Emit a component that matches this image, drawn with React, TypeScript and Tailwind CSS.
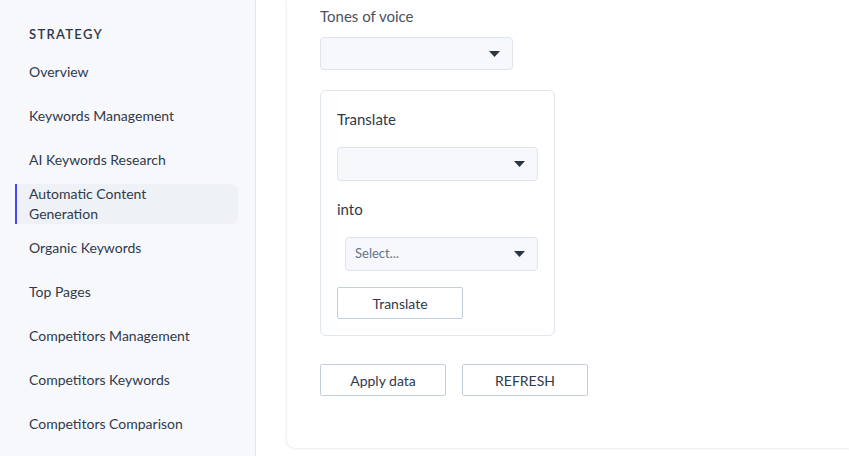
import { useState } from "react";

const navItems = [
  "Overview",
  "Keywords Management",
  "AI Keywords Research",
  "Automatic Content Generation",
  "Organic Keywords",
  "Top Pages",
  "Competitors Management",
  "Competitors Keywords",
  "Competitors Comparison",
];

function Caret() {
  return (
    <svg width="11" height="6" viewBox="0 0 11 6" className="shrink-0">
      <path d="M0 0h11L5.5 6z" fill="#2b3443" />
    </svg>
  );
}

function SelectBox({ placeholder, className }: { placeholder?: string; className: string }) {
  return (
    <div
      className={`flex items-center justify-between rounded-[4px] border border-[#dfe4ed] bg-[#f6f8fb] pl-[9px] pr-[12px] ${className}`}
    >
      <span className="text-[13px] text-[#66728a]">{placeholder}</span>
      <Caret />
    </div>
  );
}

function OutlineButton({ label, className = "" }: { label: string; className?: string }) {
  return (
    <button
      className={`h-[32px] w-[126px] rounded-[2px] border border-[#c5cfdc] bg-white text-[14px] text-[#2f3a4c] ${className}`}
    >
      {label}
    </button>
  );
}

export default function App() {
  const [active] = useState("Automatic Content Generation");

  return (
    <div
      className="flex h-[456px] w-[849px] overflow-hidden bg-white"
      style={{ fontFamily: "Lato, 'Open Sans', sans-serif" }}
    >
      {/* sidebar */}
      <aside className="w-[256px] shrink-0 border-r border-[#e4e7f0] bg-[#f7f8fc] pt-[24px]">
        <div className="pl-[29px] text-[13px] font-semibold uppercase leading-[20px] tracking-[0.1em] text-[#2e3747]">
          Strategy
        </div>
        <nav className="mt-[8px] flex flex-col gap-[4px] pl-[15px] pr-[17px]">
          {navItems.map((item) => {
            const isActive = item === active;
            return (
              <div
                key={item}
                className={`flex h-[40px] items-center rounded-r-[8px] border-l-2 pl-[12px] pr-[20px] text-[14px] leading-[20px] text-[#2f3a4c] ${
                  isActive ? "border-[#4747f5] bg-[#eef1f6]" : "border-transparent"
                }`}
              >
                {item}
              </div>
            );
          })}
        </nav>
      </aside>

      {/* main */}
      <main className="flex-1 pb-[8px] pl-[31px]">
        <div className="h-full rounded-bl-[8px] bg-white pl-[33px] pt-[6px] shadow-[0_0_3px_rgba(30,40,60,0.18)]">
          <div className="text-[15px] leading-[20px] text-[#4b5262]">Tones of voice</div>
          <SelectBox className="mt-[11px] h-[33px] w-[193px]" />

          <div className="mt-[20px] w-[235px] rounded-[6px] border border-[#e0e6ee] px-[16px] pb-[16px] pt-[18px]">
            <div className="text-[15px] leading-[20px] text-[#2f3a4c]">Translate</div>
            <SelectBox className="mt-[18px] h-[34px] w-[201px]" />
            <div className="mt-[18px] text-[15px] leading-[20px] text-[#2f3a4c]">into</div>
            <SelectBox placeholder="Select..." className="ml-[8px] mt-[18px] h-[34px] w-[193px]" />
            <OutlineButton label="Translate" className="mt-[16px]" />
          </div>

          <div className="mt-[28px] flex gap-[16px]">
            <OutlineButton label="Apply data" />
            <OutlineButton label="REFRESH" />
          </div>
        </div>
      </main>
    </div>
  );
}
